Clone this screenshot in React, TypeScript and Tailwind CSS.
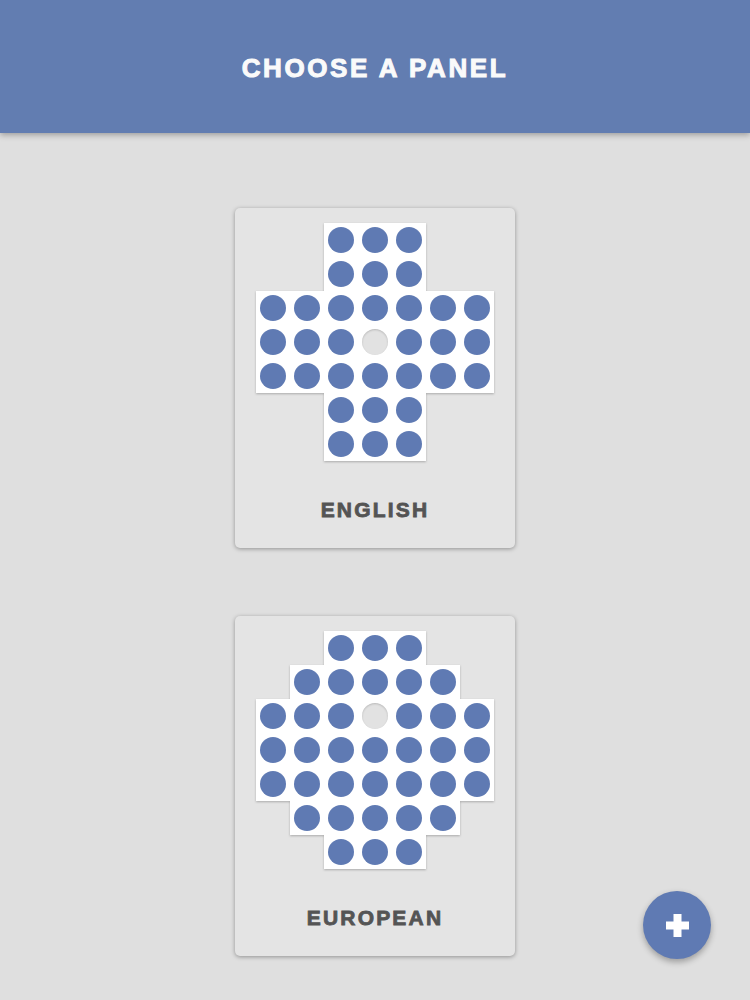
import React from "react";

const ENGLISH = [
  "..XXX..",
  "..XXX..",
  "XXXXXXX",
  "XXXOXXX",
  "XXXXXXX",
  "..XXX..",
  "..XXX..",
];

const EUROPEAN = [
  "..XXX..",
  ".XXXXX.",
  "XXXOXXX",
  "XXXXXXX",
  "XXXXXXX",
  ".XXXXX.",
  "..XXX..",
];

const Board = ({ layout }: { layout: string[] }) => {
  return (
    <div className="grid grid-cols-[repeat(7,34px)] grid-rows-[repeat(7,34px)] [filter:drop-shadow(0_1px_1px_rgba(0,0,0,0.25))]">
      {layout.flatMap((row, r) =>
        row.split("").map((cell, c) => (
          <div
            key={`${r}-${c}`}
            className={`flex items-center justify-center ${cell === "." ? "" : "bg-white"}`}
          >
            {cell === "X" && <div className="h-[26px] w-[26px] rounded-full bg-[#5f7ab3]" />}
            {cell === "O" && (
              <div className="h-[26px] w-[26px] rounded-full bg-[#e2e2e2] shadow-[inset_0_1px_2px_rgba(0,0,0,0.18)]" />
            )}
          </div>
        ))
      )}
    </div>
  );
};

const PanelCard = ({ name, layout }: { name: string; layout: string[] }) => (
  <div className="flex w-[280px] flex-col items-center rounded-[5px] bg-[#e4e4e4] pt-[15px] pb-[26px] shadow-[0_1px_4px_rgba(0,0,0,0.35)]">
    <Board layout={layout} />
    <p className="mt-[37px] text-[21px] leading-[24px] font-bold tracking-[2.2px] text-[#545454] [-webkit-text-stroke:0.8px_#545454]">
      {name}
    </p>
  </div>
);

export default function App() {
  return (
    <div
      className="relative min-h-screen bg-[#dfdfdf]"
      style={{ fontFamily: '"Liberation Sans", Arial, sans-serif' }}
    >
      <header className="flex h-[133px] justify-center bg-[#627db1] pt-[52px] shadow-[0_2px_6px_rgba(0,0,0,0.3)]">
        <h1 className="text-[26px] leading-[32px] font-bold tracking-[2.6px] text-[#fafafa] [-webkit-text-stroke:1px_#fafafa]">
          CHOOSE A PANEL
        </h1>
      </header>

      <main className="flex flex-col items-center gap-[68px] pt-[75px]">
        <PanelCard name="ENGLISH" layout={ENGLISH} />
        <PanelCard name="EUROPEAN" layout={EUROPEAN} />
      </main>

      <button className="absolute right-[39px] bottom-[41px] flex h-[68px] w-[68px] items-center justify-center rounded-full bg-[#5f7ab3] shadow-[0_3px_6px_rgba(0,0,0,0.3)]">
        <svg width="23" height="23" viewBox="0 0 23 23">
          <rect x="7.5" y="0" width="8" height="23" fill="#fff" />
          <rect x="0" y="7.5" width="23" height="8" fill="#fff" />
        </svg>
      </button>
    </div>
  );
}
